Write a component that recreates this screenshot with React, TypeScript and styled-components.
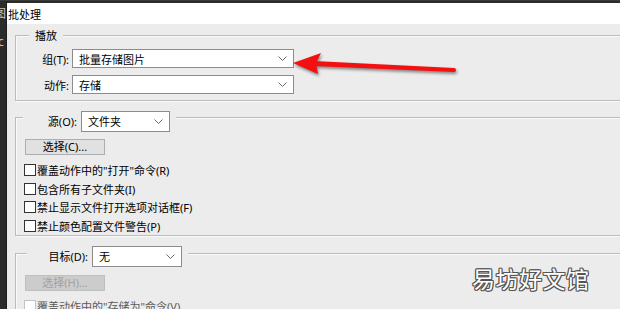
import React from 'react';
import styled, { createGlobalStyle } from 'styled-components';

const GlobalStyle = createGlobalStyle`
  html, body {
    margin: 0;
    padding: 0;
    background: #2b2b2b;
  }
  * {
    box-sizing: border-box;
  }
`;

const FONT = `"Noto Sans", "Noto Sans CJK SC", sans-serif`;
const PANEL_BG = '#ececec';

const Screen = styled.div`
  position: relative;
  display: flex;
  width: 620px;
  height: 309px;
  overflow: hidden;
  background: #2b2b2b;
  border-top: 1px solid #3a3a3a;
  font-family: ${FONT};
  font-size: 11px;
  color: #000;
`;

const LeftStrip = styled.div`
  flex: none;
  width: 7px;
  display: flex;
  flex-direction: column;
  gap: 14px;
  padding-top: 6px;
  overflow: hidden;
  color: #c4c4c4;
  font-size: 12px;
  line-height: 14px;
  border-right: 1px solid #1c1c1c;
`;

const StripGlyph = styled.span<{ $shift: number }>`
  display: block;
  white-space: nowrap;
  margin-left: ${p => p.$shift}px;
`;

const Window = styled.div`
  flex: 1;
  min-width: 0;
  margin-top: 2px;
  display: flex;
  flex-direction: column;
  background: ${PANEL_BG};
  overflow: hidden;
`;

const TitleBar = styled.div`
  height: 21px;
  flex: none;
  display: flex;
  align-items: center;
  padding-left: 1px;
  background: #fff;
  font-size: 11px;
`;

const Body = styled.div`
  display: flex;
  flex-direction: column;
  padding: 11px 0 0 8px;
`;

const GroupBox = styled.div<{ $mt: number; $pt: number }>`
  position: relative;
  margin-top: ${p => p.$mt}px;
  margin-right: -30px;
  padding: ${p => p.$pt}px 0 0 8px;
  border: 1px solid #bcbcbc;
  box-shadow: inset 1px 1px 0 #fafafa, 1px 1px 0 #fafafa;
`;

const Caption = styled.div<{ $top: number; $left: number }>`
  position: absolute;
  top: ${p => p.$top}px;
  left: ${p => p.$left}px;
  display: flex;
  align-items: center;
  gap: 4px;
  padding: 0 6px 0 4px;
  background: ${PANEL_BG};
  line-height: 16px;
`;

const CaptionText = styled.span`
  padding: 0 0 0 2px;
`;

const FieldLabel = styled.span<{ $w: number }>`
  width: ${p => p.$w}px;
  text-align: right;
  white-space: nowrap;
`;

const PlayGrid = styled.div`
  display: grid;
  grid-template-columns: 53px 222px;
  column-gap: 3px;
  row-gap: 7px;
  align-items: center;
  margin-left: -8px;
  padding-bottom: 6px;
`;

const SelectBox = styled.div<{ $w?: number; $h: number }>`
  display: flex;
  align-items: center;
  justify-content: space-between;
  width: ${p => (p.$w ? `${p.$w}px` : '100%')};
  height: ${p => p.$h}px;
  padding: 0 6px 0 6px;
  background: #fff;
  border: 1px solid #8c8c8c;
  white-space: nowrap;
`;

const Chevron = styled.svg`
  flex: none;
  width: 9px;
  height: 5px;
`;

const PushButton = styled.div<{ $disabled?: boolean }>`
  width: 80px;
  height: 16px;
  margin-left: 1px;
  margin-bottom: 6px;
  display: flex;
  align-items: center;
  justify-content: center;
  background: ${p => (p.$disabled ? '#cccccc' : '#e1e1e1')};
  border: 1px solid ${p => (p.$disabled ? '#bfbfbf' : '#adadad')};
  color: ${p => (p.$disabled ? '#a2a2a2' : '#000')};
  line-height: 14px;
`;

const CheckRow = styled.div<{ $disabled?: boolean }>`
  display: flex;
  align-items: center;
  gap: 1px;
  height: 18.5px;
  white-space: nowrap;
  color: ${p => (p.$disabled ? '#5a5a5a' : '#000')};
`;

const CheckBox = styled.span<{ $disabled?: boolean }>`
  flex: none;
  width: 12px;
  height: 12px;
  background: #fff;
  border: 1px solid ${p => (p.$disabled ? '#c4c4c4' : '#333')};
`;

const ArrowLayer = styled.svg`
  position: absolute;
  left: 290px;
  top: 47px;
  width: 175px;
  height: 34px;
  overflow: visible;
  filter: drop-shadow(1px 2px 1.5px rgba(0, 0, 0, 0.45));
`;

const Watermark = styled.div`
  position: absolute;
  left: 472px;
  top: 262px;
  font-family: "Noto Sans CJK SC", sans-serif;
  font-size: 23px;
  line-height: 30px;
  color: #fff;
  letter-spacing: 0.5px;
  text-shadow:
    1px 0 0 #555, -1px 0 0 #555, 0 1px 0 #555, 0 -1px 0 #555,
    1px 1px 0 #555, -1px -1px 0 #555, 1px -1px 0 #555, -1px 1px 0 #555;
`;

const Select: React.FC<{ value: string; width?: number; height?: number }> = ({ value, width, height = 19 }) => (
  <SelectBox $w={width} $h={height}>
    <span>{value}</span>
    <Chevron viewBox="0 0 9 5">
      <path d="M0.5 0.5 L4.5 4.5 L8.5 0.5" fill="none" stroke="#6a6a6a" strokeWidth="1" />
    </Chevron>
  </SelectBox>
);

const sourceOptions = [
  '覆盖动作中的"打开"命令(R)',
  '包含所有子文件夹(I)',
  '禁止显示文件打开选项对话框(F)',
  '禁止颜色配置文件警告(P)',
];

export default function App() {
  return (
    <>
      <GlobalStyle />
      <Screen>
        <LeftStrip>
          <StripGlyph $shift={-6}>图</StripGlyph>
          <StripGlyph $shift={-2}>c</StripGlyph>
        </LeftStrip>
        <Window>
          <TitleBar>批处理</TitleBar>
          <Body>
            <GroupBox $mt={0} $pt={13}>
              <Caption $top={-8} $left={13}>
                <CaptionText>播放</CaptionText>
              </Caption>
              <PlayGrid>
                <FieldLabel $w={53}>组(T):</FieldLabel>
                <Select value="批量存储图片" />
                <FieldLabel $w={53}>动作:</FieldLabel>
                <Select value="存储" />
              </PlayGrid>
            </GroupBox>

            <GroupBox $mt={16} $pt={21}>
              <Caption $top={-7} $left={7}>
                <FieldLabel $w={50}>源(O):</FieldLabel>
                <Select value="文件夹" width={89} height={21} />
              </Caption>
              <PushButton>选择(C)...</PushButton>
              {sourceOptions.map(label => (
                <CheckRow key={label}>
                  <CheckBox />
                  <span>{label}</span>
                </CheckRow>
              ))}
            </GroupBox>

            <GroupBox $mt={17} $pt={21}>
              <Caption $top={-8} $left={11}>
                <FieldLabel $w={57}>目标(D):</FieldLabel>
                <Select value="无" width={90} height={21} />
              </Caption>
              <PushButton $disabled>选择(H)...</PushButton>
              <CheckRow $disabled>
                <CheckBox $disabled />
                <span>覆盖动作中的"存储为"命令(V)</span>
              </CheckRow>
            </GroupBox>
          </Body>
        </Window>

        <ArrowLayer viewBox="0 0 175 34">
          <polygon points="3,15 31,5 26,15 28,26" fill="#f41010" />
          <polygon points="24,13 164,20 164,24 24,18" fill="#f41010" />
          <circle cx="164" cy="22" r="2" fill="#f41010" />
        </ArrowLayer>
        <Watermark>易坊好文馆</Watermark>
      </Screen>
    </>
  );
}
